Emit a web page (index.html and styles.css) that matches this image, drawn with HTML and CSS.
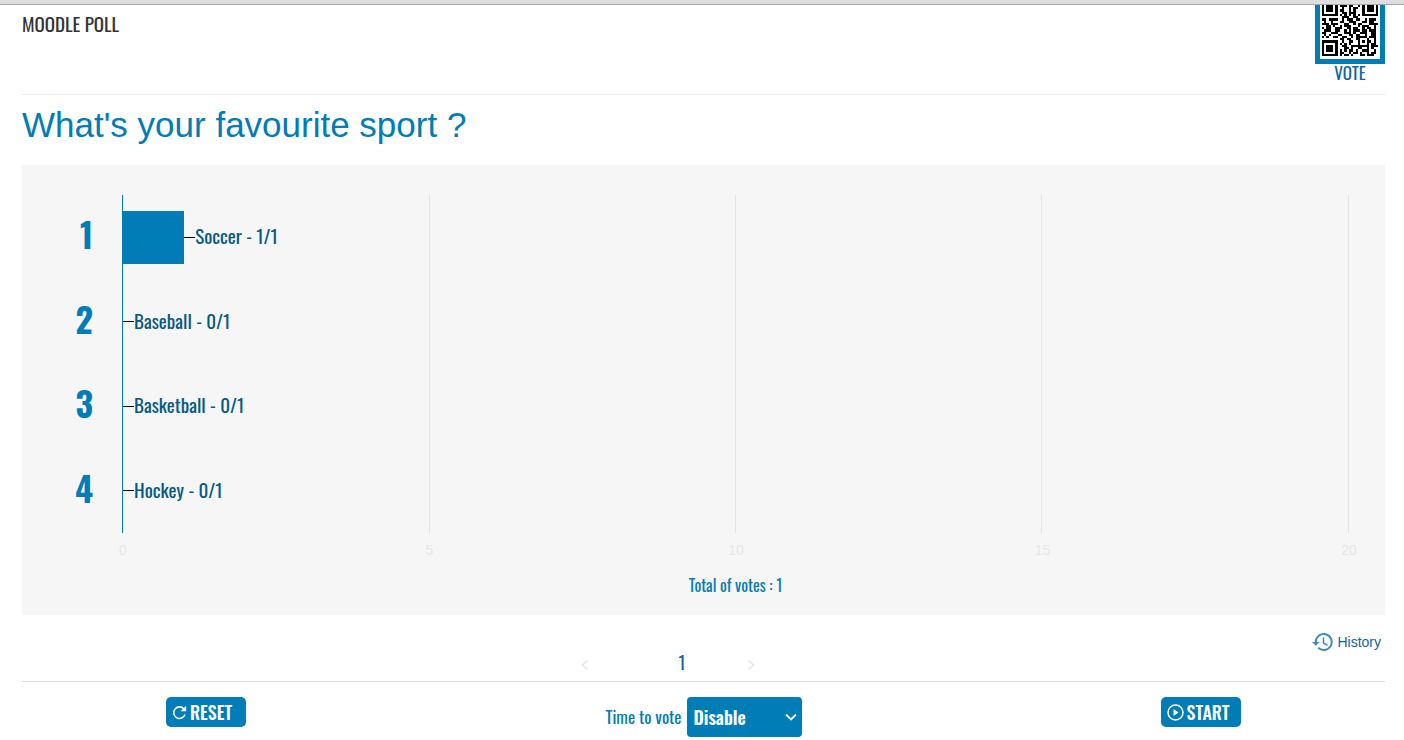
FILE: index.html
```
<!DOCTYPE html>
<html lang="en">
<head>
<meta charset="utf-8">
<title>Moodle poll</title>
<link rel="stylesheet" href="styles.css">
</head>
<body>
<div class="topbar"></div>
<div class="page">
  <header class="header">
    <h1 class="site">MOODLE POLL</h1>
    <a class="vote" href="#vote">
      <svg class="qr" viewBox="0 2 25 23" preserveAspectRatio="none" shape-rendering="crispEdges" aria-hidden="true">
        <path fill="none" stroke="#000" d="M0 2.5h1m1 0h3m1 0h1m1 0h3m1 0h2m2 0h1m1 0h1m1 0h3m1 0h1M0 3.5h1m1 0h3m1 0h1m2 0h1m2 0h1m1 0h2m2 0h1m1 0h3m1 0h1M0 4.5h1m1 0h3m1 0h1m1 0h2m2 0h1m1 0h1m3 0h1m1 0h3m1 0h1M0 5.5h1m5 0h1m2 0h2m1 0h3m3 0h1m5 0h1M0 6.5h7m1 0h1m1 0h1m1 0h1m1 0h1m1 0h1m1 0h7M9 7.5h3m2 0h2M0 8.5h2m1 0h4m2 0h1m1 0h3m1 0h2m2 0h1m1 0h3M1 9.5h1m2 0h1m3 0h2m2 0h3m3 0h2m1 0h2M0 10.5h3m1 0h3m3 0h2m2 0h1m1 0h2m3 0h4M2 11.5h2m1 0h1m2 0h1m1 0h3m3 0h1m1 0h3m2 0h1M0 12.5h1m1 0h2m2 0h3m2 0h2m1 0h2m2 0h1m1 0h2m1 0h1M1 13.5h3m2 0h2m2 0h1m1 0h1m1 0h3m1 0h2m1 0h3M0 14.5h2m2 0h3m3 0h3m1 0h1m2 0h3m2 0h2M1 15.5h1m1 0h1m3 0h2m3 0h2m1 0h2m2 0h1m2 0h2M0 16.5h1m1 0h1m2 0h2m2 0h2m2 0h1m1 0h5m1 0h3M8 17.5h2m1 0h2m2 0h2m3 0h1m2 0h1M0 18.5h7m2 0h1m2 0h2m2 0h1m1 0h1m1 0h2m1 0h1M0 19.5h1m5 0h1m1 0h1m1 0h1m1 0h1m3 0h1m3 0h1m1 0h2M0 20.5h1m1 0h3m1 0h1m2 0h2m2 0h8m1 0h3M0 21.5h1m1 0h3m1 0h1m3 0h2m1 0h1m2 0h2m2 0h1m1 0h1M0 22.5h1m1 0h3m1 0h1m1 0h1m1 0h1m1 0h2m1 0h1m2 0h3m2 0h1M0 23.5h1m5 0h1m1 0h2m2 0h1m1 0h2m1 0h1m2 0h1m1 0h2M0 24.5h7m1 0h1m1 0h2m1 0h1m3 0h2m1 0h3"/>
      </svg>
      <span>VOTE</span>
    </a>
  </header>
  <h2 class="question">What's your favourite sport ?</h2>
  <section class="chart">
    <div class="plot">
      <div class="row"><span class="num">1</span><div class="lane"><i class="bar" style="width:5%"></i><i class="tick"></i><span class="label">Soccer - 1/1</span></div></div>
      <div class="row"><span class="num">2</span><div class="lane"><i class="tick"></i><span class="label">Baseball - 0/1</span></div></div>
      <div class="row"><span class="num">3</span><div class="lane"><i class="tick"></i><span class="label">Basketball - 0/1</span></div></div>
      <div class="row"><span class="num">4</span><div class="lane"><i class="tick"></i><span class="label">Hockey - 0/1</span></div></div>
    </div>
    <div class="scale"><span>0</span><span>5</span><span>10</span><span>15</span><span>20</span></div>
    <p class="total">Total of votes : 1</p>
  </section>
  <div class="pager">
    <nav class="pages" aria-label="Questions">
      <button class="arrow" aria-label="Previous"><svg width="8" height="12" viewBox="0 0 8 12"><path d="M6.500 1.500L1.500 6l5 4.500"/></svg></button>
      <span class="current">1</span>
      <button class="arrow" aria-label="Next"><svg width="8" height="12" viewBox="0 0 8 12"><path d="M1.500 1.500L6.500 6l-5 4.500"/></svg></button>
    </nav>
    <a class="history" href="#history">
      <svg width="21" height="20" viewBox="0 0 21 20" aria-hidden="true"><path d="M3.700 10A8 8 0 1 1 6.200 15.800" fill="none" stroke="#3f8db3" stroke-width="2"/><path d="M0 10h7.500L3.800 13.800z" fill="#3f8db3"/><path d="M11.500 5.500V11l4 2.300" fill="none" stroke="#3f8db3" stroke-width="1.500"/></svg>
      <span>History</span>
    </a>
  </div>
  <footer class="controls">
    <div class="cell"><button class="btn"><svg width="15" height="15" viewBox="0 0 15 15" aria-hidden="true"><path d="M12 4A5.800 5.800 0 1 0 13 9.500" fill="none" stroke="#fff" stroke-width="1.600"/><path d="M14.200 .8V6.200H8.500z" fill="#fff"/></svg>RESET</button></div>
    <div class="cell"><label class="time" for="time">Time to vote</label><div class="picker"><select id="time"><option>Disable</option></select><svg class="caret" width="12" height="8" viewBox="0 0 12 8" aria-hidden="true"><path d="M1 1.500l5 5 5-5" fill="none" stroke="#fff" stroke-width="1.800"/></svg></div></div>
    <div class="cell"><button class="btn"><svg width="17" height="17" viewBox="0 0 17 17" aria-hidden="true"><circle cx="8.500" cy="8.500" r="7.500" fill="none" stroke="#fff" stroke-width="1.500"/><path d="M6.500 5l5 3.500-5 3.500z" fill="#fff"/></svg>START</button></div>
  </footer>
</div>
</body>
</html>
```
FILE: styles.css
```
* { box-sizing: border-box; }
body { margin: 0; background: #fff; color: #007cb7; font-family: Oswald, "Liberation Sans Narrow", "Liberation Sans", sans-serif; }
a { color: inherit; text-decoration: none; }
button { margin: 0; padding: 0; border: 0; background: none; color: inherit; font: inherit; }
.topbar { height: 5px; background: #dedede; border-bottom: 1px solid #a8a8a8; }
.page { padding: 0 19px 0 22px; }

.header { display: flex; justify-content: space-between; height: 90px; border-bottom: 1px solid #eee; }
.site { margin: 6px 0 0; color: #333; font-size: 19px; line-height: 24px; font-weight: 400; }
.vote { display: flex; flex-direction: column; align-items: center; color: #1263a0; font-size: 17px; line-height: 18px; }
.qr { width: 70px; height: 59px; padding: 0 2px 3px; border: solid #007cb7; border-width: 0 5px 5px; }
.question { margin: 0; padding: 10px 0 20px; font: 400 35px/40px "Liberation Sans", Arial, sans-serif; }

.chart { padding: 30px 36px 20px 100px; background: #f6f6f6; }
.plot {
  --line: linear-gradient(#e4e4e4, #e4e4e4);
  height: 338px;
  display: grid;
  grid-template-rows: repeat(4, 1fr);
  border-left: 1px solid #007cb7;
  border-right: 1px solid #e4e4e4;
  background-image: var(--line), var(--line), var(--line);
  background-position: 25% 0, 50% 0, 75% 0;
  background-size: 1px 100%;
  background-repeat: no-repeat;
}
.row { display: flex; align-items: center; margin-left: -54px; }
.num { width: 24px; margin-right: 30px; padding-bottom: 6px; text-align: right; font-size: 34px; line-height: 40px; font-weight: 700; }
.lane { flex: 1; display: flex; align-items: center; }
.bar { height: 53px; background: #007cb7; }
.tick { width: 11px; height: 1px; background: #000; }
.label { padding-bottom: 4px; color: #055a83; font-size: 19px; line-height: 24px; }
.scale { display: flex; justify-content: space-between; margin: 8px -20px 0 -19px; color: #e6e6e6; font: 14px/18px "Liberation Sans", Arial, sans-serif; }
.scale span { width: 40px; text-align: center; }
.total { margin: 16px 0 0; text-align: center; font-size: 16px; line-height: 20px; }

.pager { display: flex; justify-content: space-between; height: 67px; padding: 17px 4px 0 41%; border-bottom: 1px solid #ddd; }
.pages { display: flex; align-items: center; justify-content: space-between; align-self: flex-end; width: 174px; height: 32px; }
.arrow { display: flex; width: 8px; }
.arrow path { fill: none; stroke: #e4e4e4; stroke-width: 1.5; }
.current { margin-left: 28px; padding-bottom: 6px; color: #1263a0; font-size: 18px; line-height: 20px; }
.history { display: flex; align-items: center; gap: 4px; height: 20px; color: #1263a0; font: 14px/20px "Liberation Sans", Arial, sans-serif; }

.controls { display: grid; grid-template-columns: 27% 46% 27%; align-items: start; padding-top: 15px; }
.cell { display: flex; align-items: center; justify-content: center; gap: 5px; }
.btn { display: flex; align-items: center; gap: 3px; min-width: 80px; height: 30px; padding: 0 12px 0 6px; border-radius: 5px; background: #007cb7; color: #fff; font-size: 18px; line-height: 24px; font-weight: 500; }
.time { font-size: 17px; line-height: 24px; }
.picker { display: grid; align-items: center; width: 115px; height: 40px; }
.picker > * { grid-area: 1 / 1; }
.picker select { appearance: none; width: 100%; height: 40px; padding: 0 28px 0 7px; border: 0; border-radius: 4px; background: #007cb7; color: #fff; font: 600 18px/24px Oswald, "Liberation Sans Narrow", sans-serif; }
.caret { justify-self: end; margin-right: 5px; pointer-events: none; }
```
